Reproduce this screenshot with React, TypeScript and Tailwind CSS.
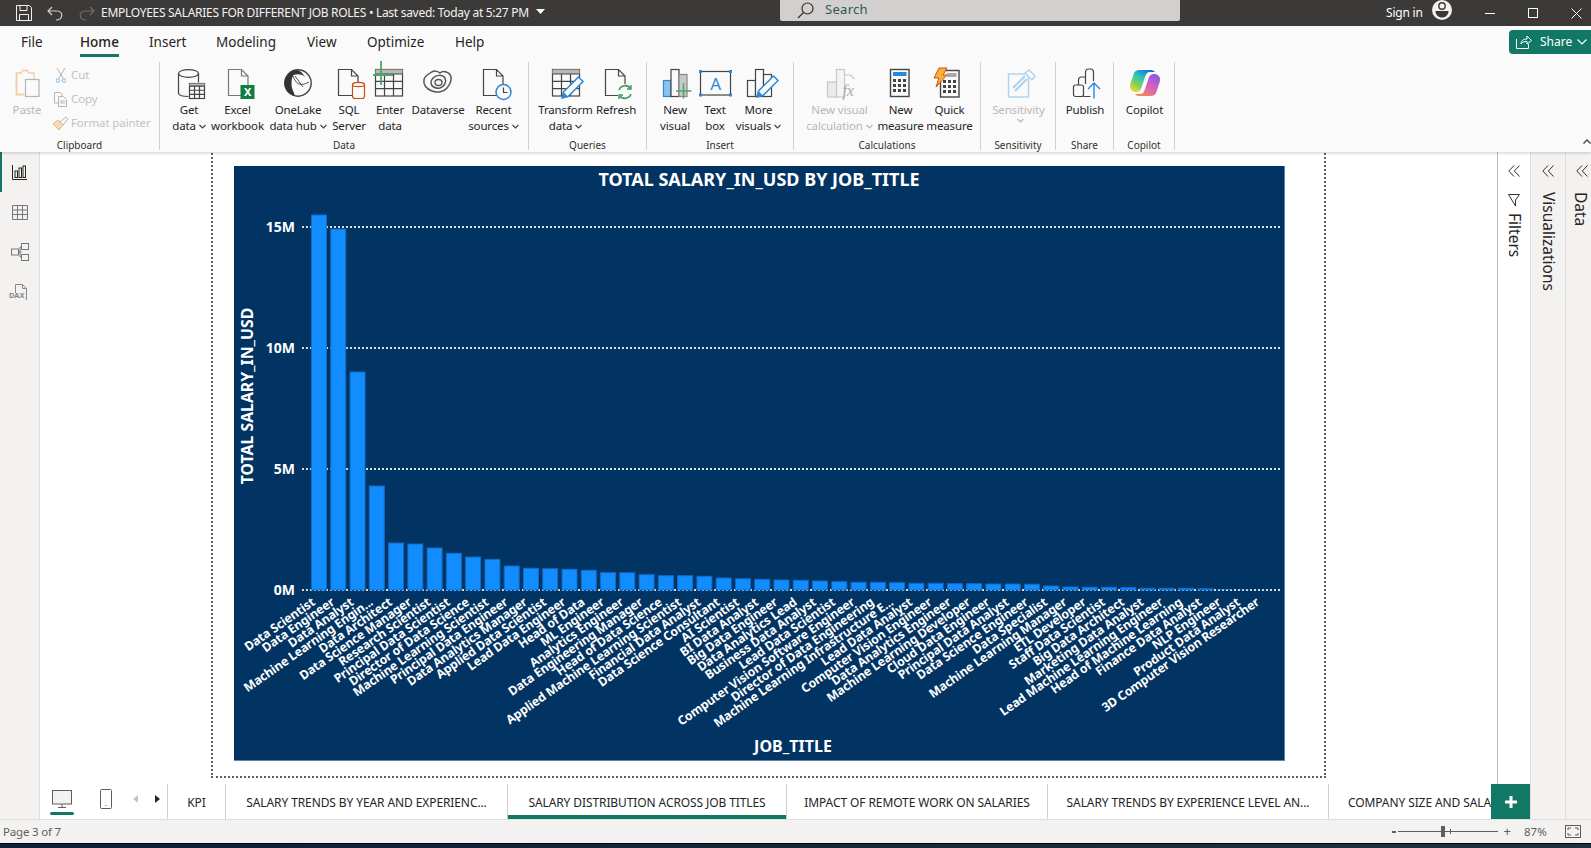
import React from "react";

const F = '"Noto Sans","Liberation Sans",sans-serif';
const DK = "#444";
const titles: [string, number][] = [
  ["Data Scientist", 375], ["Data Engineer", 361], ["Data Analyst", 218], ["Machine Learning Engin...", 104], ["Data Architect", 47],
  ["Data Science Manager", 46], ["Research Scientist", 42], ["Principal Data Scientist", 36.7], ["Director of Data Science", 33], ["Machine Learning Scientist", 30.7],
  ["Principal Data Engineer", 24], ["Data Analytics Manager", 21.7], ["Applied Data Scientist", 21.3], ["Lead Data Engineer", 20.7], ["Head of Data", 19.7],
  ["ML Engineer", 17.3], ["Analytics Engineer", 17.3], ["Data Engineering Manager", 15.3], ["Head of Data Science", 14.3], ["Applied Machine Learning Scientist", 14.3],
  ["Financial Data Analyst", 13.7], ["Data Science Consultant", 12], ["AI Scientist", 11.3], ["BI Data Analyst", 10.7], ["Big Data Engineer", 10],
  ["Data Analytics Lead", 9.7], ["Business Data Analyst", 9], ["Lead Data Scientist", 8.3], ["Computer Vision Software Engineer", 7.7], ["Director of Data Engineering", 7.7],
  ["Machine Learning Infrastructure E...", 7.3], ["Lead Data Analyst", 6.7], ["Computer Vision Engineer", 6.7], ["Data Analytics Engineer", 6.3], ["Machine Learning Developer", 6.3],
  ["Cloud Data Engineer", 6], ["Principal Data Analyst", 6], ["Data Science Engineer", 5.7], ["Data Specialist", 4], ["Machine Learning Manager", 3],
  ["ETL Developer", 2.7], ["Staff Data Scientist", 2.7], ["Big Data Architect", 2.3], ["Marketing Data Analyst", 1.7], ["Lead Machine Learning Engineer", 1.7],
  ["Head of Machine Learning", 1.7], ["Finance Data Analyst", 1.3], ["NLP Engineer", 0.6], ["Product Data Analyst", 0.4], ["3D Computer Vision Researcher", 0.2],
];

function Chart() {
  const y0 = 424;
  const grid: [string, number][] = [["15M", 61], ["10M", 182], ["5M", 303], ["0M", 424]];
  return (
    <svg width={1050} height={594} viewBox="0 0 1050 594" fontFamily={F} fill="#fff" fontWeight={700}>
      <text x={525} y={19.5} textAnchor="middle" fontSize={18} letterSpacing={0}>TOTAL SALARY_IN_USD BY JOB_TITLE</text>
      <text transform="translate(19 230) rotate(-90)" textAnchor="middle" fontSize={15.8}>TOTAL SALARY_IN_USD</text>
      <text x={559} y={586} textAnchor="middle" fontSize={16}>JOB_TITLE</text>
      {grid.map(([t, y]) => (
        <g key={t}>
          <line x1={68} x2={1046} y1={y} y2={y} stroke="#dcdcdc" strokeWidth={2} strokeDasharray="2 2" />
          <text x={61} y={y + 5} textAnchor="end" fontSize={14}>{t}</text>
        </g>
      ))}
      {titles.map(([name, h], i) => {
        const x = 77 + i * 19.27;
        return <rect key={name} x={x + 0.5} y={y0 - h} width={15} height={h} fill="#118DFF" stroke="#0f6cc4" strokeWidth={h > 1 ? 1 : 0} />;
      })}
      {titles.map(([name], i) => {
        const cx = 77 + i * 19.27 + 5;
        return (
          <text key={name} transform={`translate(${cx} 438) rotate(-35)`} textAnchor="end" fontSize={12.3} letterSpacing={-0.15}>{name}</text>
        );
      })}
    </svg>
  );
}

const S = ({ children, size = 32 }: { children: React.ReactNode; size?: number }) => (
  <svg width={size} height={size} viewBox={`0 0 ${size} ${size}`} fill="none" strokeWidth={1.2} className="overflow-visible block">{children}</svg>
);
const Doc = ({ x = 5, c = DK }: { x?: number; c?: string }) => (
  <path d={`M${x + 0.5} 1.5h13l6.5 6.5v19.5h-19.5zM${x + 13.5} 1.5v6.5h6.5`} stroke={c} fill="#fafafa" />
);
const TableGrid = ({ x, y, w, h, c = DK }: { x: number; y: number; w: number; h: number; c?: string }) => (
  <g stroke={c}>
    <rect x={x} y={y} width={w} height={h} fill="#fafafa" />
    <rect x={x} y={y} width={w} height={h * 0.17} fill="#b8b8b8" stroke="none" />
    <path d={`M${x} ${y + h * 0.17}h${w}M${x} ${y + h * 0.45}h${w}M${x} ${y + h * 0.72}h${w}M${x + w / 3} ${y + h * 0.17}v${h * 0.83}M${x + (2 * w) / 3} ${y + h * 0.17}v${h * 0.83}`} />
  </g>
);
const Pencil = ({ x = 0, y = 0 }: { x?: number; y?: number }) => (
  <g transform={`translate(${x} ${y})`}>
    <path d="M12 30l1.5-6 15-15 4.5 4.5-15 15z" fill="#fff" stroke="#2b88d8" strokeWidth={1.5} />
    <path d="M12 30l1.5-6 4.5 4.5z" fill="#2b88d8" />
  </g>
);
const Bars = () => (
  <g stroke={DK}>
    <rect x={4.5} y={12.5} width={8} height={16} fill="#fafafa" />
    <rect x={12.5} y={1.5} width={8} height={27} fill="#fafafa" />
    <rect x={20.5} y={6.5} width={8} height={22} fill="#fafafa" />
  </g>
);

const icons: Record<string, React.ReactNode> = {
  get: (
    <S>
      <path d="M5.5 5.5v19.5c0 2 4 3.5 10 3.5M25.5 5.5v9" stroke={DK} />
      <ellipse cx={15.5} cy={5.5} rx={10} ry={3.8} stroke={DK} />
      <TableGrid x={16.5} y={15.5} w={15} h={15} />
    </S>
  ),
  excel: (
    <S>
      <Doc x={6} c="#777" />
      <rect x={18.5} y={17} width={14} height={14} fill="#107c41" />
      <text x={25.5} y={28} fontSize={11} fontWeight={700} fill="#fff" textAnchor="middle" fontFamily={F}>X</text>
    </S>
  ),
  onelake: (
    <S>
      <circle cx={16} cy={15} r={13.2} stroke={DK} strokeWidth={1.4} fill="#fafafa" />
      <path d="M14 2c-6 1-11.5 6-11.5 13s5 11 10 13c1-2-3-6-3-12 0-4 .5-7 2-9 4-1.5 9-1 12 2.5C21 6 18 1.5 14 2z" fill="#333" />
      <path d="M11 8c3 8 7 11 16 6M13 8l8 11" stroke="#555" strokeWidth={1} />
    </S>
  ),
  sql: (
    <S>
      <Doc x={5} />
      <rect x={19.5} y={15} width={12} height={15.5} rx={2.5} fill="#fafafa" stroke="#ca5010" />
      <ellipse cx={25.5} cy={16.5} rx={6} ry={2.2} fill="#fafafa" stroke="#ca5010" />
    </S>
  ),
  enter: (
    <S>
      <TableGrid x={1.5} y={1.5} w={27} h={26.5} />
      <path d="M7 -7v24M-1 7h20" stroke="#4ea66a" strokeWidth={1.8} />
    </S>
  ),
  dataverse: (
    <S>
      <path d="M8 5c4-3 8-2 10 0 3-3 10-1 11 4 1 5-2 8-4 11-3 4-10 5-15 3-6-2-9-7-8-11 0-3 3-5 6-7z" stroke="#555" strokeWidth={1.5} />
      <path d="M11 10c3-3 9-4 12 0 2 4-1 9-5 10-5 1-9-2-9-5 0-2 1-4 2-5z" stroke="#555" strokeWidth={1.5} />
      <ellipse cx={16.5} cy={14.5} rx={3.5} ry={3} stroke="#555" strokeWidth={1.4} />
    </S>
  ),
  recent: (
    <S>
      <Doc x={5} />
      <circle cx={25.5} cy={24} r={7.5} fill="#fafafa" stroke="#2b88d8" strokeWidth={1.5} />
      <path d="M25.5 19.5v5h4" stroke={DK} />
    </S>
  ),
  transform: (
    <S>
      <TableGrid x={2.5} y={1.5} w={27} h={26.5} />
      <Pencil x={0} y={0} />
    </S>
  ),
  refresh: (
    <S>
      <Doc x={5} />
      <circle cx={25} cy={24} r={8} fill="#fafafa" stroke="none" />
      <path d="M19 22a6.5 6.5 0 0 1 11.5-1.5M31 26a6.5 6.5 0 0 1-11.5 1.5" stroke="#3d9a5c" strokeWidth={1.6} />
      <path d="M31 17v4h-4M19 31v-4h4" stroke="#3d9a5c" strokeWidth={1.4} />
    </S>
  ),
  newvisual: (
    <S>
      <rect x={4.5} y={12.5} width={7.5} height={16} fill="#8cc3ec" stroke="#2b88d8" />
      <rect x={12} y={1.5} width={8} height={27} fill="#fafafa" stroke={DK} />
      <rect x={20} y={6.5} width={8} height={22} fill="#c8c8c8" stroke="#888" />
      <path d="M24.5 15v15.5M17 23h15.5" stroke="#4ea66a" strokeWidth={1.5} />
    </S>
  ),
  textbox: (
    <S>
      <rect x={1.5} y={3.5} width={30} height={23.5} stroke={DK} />
      <g fill="#2b88d8">
        <rect x={0} y={2} width={3} height={3} /><rect x={30} y={2} width={3} height={3} /><rect x={0} y={25.5} width={3} height={3} /><rect x={30} y={25.5} width={3} height={3} />
      </g>
      <text x={16.5} y={22} fontSize={17} fill="#2b88d8" textAnchor="middle" fontFamily={F}>A</text>
    </S>
  ),
  more: (
    <S>
      <Bars />
      <Pencil x={2} y={-1} />
    </S>
  ),
  calc: (
    <S>
      <g stroke="#c8c8c8">
        <rect x={3.5} y={14} width={9} height={15} fill="#ebebeb" />
        <rect x={12.5} y={1.5} width={8} height={27.5} fill="#f4f4f4" />
        <path d="M20.5 7h6l4 4" stroke="#a9cdee" />
      </g>
      <text x={24} y={28} fontSize={16} fontStyle="italic" fill="#a8a8a8" textAnchor="middle" fontFamily="'Liberation Serif',serif">fx</text>
    </S>
  ),
  measure: (
    <S>
      <rect x={5.5} y={1.5} width={18.5} height={27} stroke={DK} strokeWidth={1.4} />
      <rect x={8} y={4} width={13.5} height={4} fill="#2b88d8" />
      <g fill={DK}>
        {[11, 16, 21].map((y) => [8, 13, 18].map((x) => <rect key={`${x}${y}`} x={x} y={y} width={3} height={3} />))}
      </g>
    </S>
  ),
  quick: (
    <S>
      <rect x={6.5} y={2.5} width={18.5} height={26.5} stroke={DK} strokeWidth={1.4} />
      <rect x={13} y={5} width={9.5} height={4} fill="#a8a8a8" />
      <g fill={DK}>
        {[12, 17, 22].map((y) => [9, 14, 19].map((x) => <rect key={`${x}${y}`} x={x} y={y} width={3} height={3} />))}
      </g>
      <path d="M5 0h8L9 7h4L2 19l3-9H0z" fill="#fbb03b" stroke="#ca5010" strokeWidth={1} />
    </S>
  ),
  sens: (
    <S>
      <rect x={5.5} y={6} width={20} height={23} stroke="#a9d3f2" strokeWidth={1.4} />
      <path d="M10 20l12-12M12 23l12-12" stroke="#a9d3f2" strokeWidth={2} />
      <path d="M22 5l4-3 6 6-3 4z" stroke="#a9d3f2" strokeWidth={1.4} fill="#fafafa" />
    </S>
  ),
  publish: (
    <S>
      <rect x={4.5} y={17} width={10} height={11.5} rx={2} stroke={DK} />
      <path d="M9.5 17v-5a3 3 0 0 1 3-3h4M14.5 28.5h7" stroke={DK} />
      <path d="M16.5 16V4a3 3 0 0 1 3-3h2a3 3 0 0 1 3 3v9" stroke={DK} />
      <path d="M25 30.5V15M19 21l6-6 6 6" stroke="#2b88d8" strokeWidth={1.4} />
    </S>
  ),
  copilot: (
    <S>
      <defs>
        <linearGradient id="cpa" x1="0.8" y1="0" x2="0.2" y2="1">
          <stop offset="0" stopColor="#0f6cd9" /><stop offset="0.4" stopColor="#2cc3c0" /><stop offset="0.75" stopColor="#8ed24d" /><stop offset="1" stopColor="#f7d43c" />
        </linearGradient>
        <linearGradient id="cpb" x1="0.8" y1="0" x2="0.2" y2="1">
          <stop offset="0" stopColor="#8a5ae0" /><stop offset="0.5" stopColor="#d95fc0" /><stop offset="1" stopColor="#f58a4a" />
        </linearGradient>
      </defs>
      <path d="M10 2h12c2 0 3 1 4 2l-5 0c-3 0-4 2-5 5l-4 12c-1 2-3 3-5 3-3 0-6-2-6-5 0-1 0-3 1-5l3-9C6 3 8 2 10 2z" fill="url(#cpa)" />
      <path d="M22 28H10c-2 0-3-1-4-2l5 0c3 0 4-2 5-5l4-12c1-2 3-3 5-3 3 0 6 2 6 5 0 1 0 3-1 5l-3 9c-1 2-3 3-5 3z" fill="url(#cpb)" />
    </S>
  ),
  paste: (
    <S>
      <path d="M5 5h5.5l1-2.5h5l1 2.5H23v8" stroke="#f2cfa3" strokeWidth={1.3} />
      <path d="M5.5 5v21.5h8" stroke="#f2cfa3" strokeWidth={2} />
      <rect x={14.5} y={11.5} width={13.5} height={17} stroke="#b5b5b5" fill="#fafafa" />
    </S>
  ),
};

function Caret({ c = "#444" }: { c?: string }) {
  return (
    <svg width={7} height={5} viewBox="0 0 7 5" className="inline-block ml-[3px]" fill="none" stroke={c} strokeWidth={1.2}>
      <path d="M.5 1l3 3 3-3" />
    </svg>
  );
}

function Btn({ w, icon, l1, l2, caret, off }: { w: number; icon: string; l1: string; l2?: string; caret?: boolean; off?: boolean }) {
  return (
    <div style={{ width: w }} className={`flex flex-col items-center shrink-0 whitespace-nowrap text-[11.5px] leading-[16px] tracking-[-0.15px] ${off ? "text-[#b9b7b5]" : "text-[#252423]"}`}>
      <div className="h-[34px] w-[32px]">{icons[icon]}</div>
      <div>{l1}</div>
      <div className="flex items-center">
        {l2 ?? ""}
        {caret && <Caret c={off ? "#b9b7b5" : "#444"} />}
      </div>
    </div>
  );
}

function Group({ w, label, pl, children }: { w: number; label: string; pl: number; children: React.ReactNode }) {
  return (
    <div style={{ width: w }} className="h-[88px] shrink-0 flex flex-col border-r border-[#d2d0ce]">
      <div style={{ paddingLeft: pl }} className="flex h-[76px] shrink-0 pt-[6px]">{children}</div>
      <div className="text-center text-[10px] leading-[14px] text-[#323130]">{label}</div>
    </div>
  );
}

function TitleBar() {
  return (
    <div className="h-[26px] bg-[#3b3a39] flex items-center text-white text-[12px]">
      <svg width={16} height={16} viewBox="0 0 16 16" fill="none" stroke="#f3f2f1" className="ml-[16px]">
        <path d="M.5.5h13l2 2v13H.5zM4 .5v5h7v-5M3.5 15.5v-6h9v6" />
      </svg>
      <svg width={16} height={15} viewBox="0 0 16 15" fill="none" stroke="#d2d0ce" strokeWidth={1.2} className="ml-[15px]">
        <path d="M5 1L1 5l4 4M1 5h9c7 0 6 9-1 9" />
      </svg>
      <svg width={16} height={15} viewBox="0 0 16 15" fill="none" stroke="#6e6d6c" strokeWidth={1.2} className="ml-[16px]">
        <path d="M11 1l4 4-4 4M15 5H6c-7 0-6 9 1 9" />
      </svg>
      <div className="ml-[6px] whitespace-nowrap tracking-[-0.29px] w-[435px] text-[#f3f2f1]">EMPLOYEES SALARIES FOR DIFFERENT JOB ROLES • Last saved: Today at 5:27 PM</div>
      <svg width={9} height={5} viewBox="0 0 9 5" fill="#fff" className="mb-[4px]"><path d="M0 0h9L4.5 5z" /></svg>
      <div className="ml-[235px] self-start h-[21px] w-[400px] bg-[#d2d0ce] rounded-b-[2px] flex items-center pl-[17px] text-[13px] text-[#2c5a52]">
        <svg width={17} height={17} viewBox="0 0 17 17" fill="none" stroke="#323130" strokeWidth={1.2}>
          <circle cx={10.5} cy={6.5} r={5.5} /><path d="M6.5 10.5L1 16" />
        </svg>
        <span className="ml-[11px] tracking-[0.3px] leading-none pb-[2px]">Search</span>
      </div>
      <div className="ml-[206px] tracking-[-0.2px]">Sign in</div>
      <svg width={20} height={20} viewBox="0 0 20 20" className="ml-[9px] mb-[7px]">
        <circle cx={10} cy={10} r={10} fill="#f3f2f1" />
        <circle cx={10} cy={6} r={3.2} fill="none" stroke="#3b3a39" strokeWidth={1.4} />
        <path d="M3.5 11h13c0 4-3 6.5-6.5 6.5S3.5 15 3.5 11z" fill="#3b3a39" />
      </svg>
      <div className="w-[10px] h-[1px] bg-white ml-[33px]" />
      <div className="w-[10px] h-[10px] border border-white ml-[33px]" />
      <svg width={11} height={11} viewBox="0 0 11 11" stroke="#fff" className="ml-[33px]"><path d="M.5.5l10 10M10.5.5l-10 10" /></svg>
    </div>
  );
}

function Small({ icon, label }: { icon: React.ReactNode; label: string }) {
  return (
    <div className="h-[24px] flex items-center text-[11.5px] text-[#c4c2c0] tracking-[-0.1px] whitespace-nowrap">
      <div className="w-[21px] flex justify-center">{icon}</div>
      {label}
    </div>
  );
}

function Ribbon() {
  return (
    <div className="h-[126px] bg-[#fafafa] relative z-10 shadow-[0_1px_3px_rgba(0,0,0,0.2)]">
      <div className="h-[36px] flex text-[13.5px] text-[#252423] pt-[5px] relative">
        {([["File", 21], ["Home", 80], ["Insert", 149], ["Modeling", 216], ["View", 307], ["Optimize", 367], ["Help", 455]] as [string, number][]).map(([t, x], i, a) => (
          <div key={t} style={{ width: i < a.length - 1 ? a[i + 1][1] - x : 50, marginLeft: i === 0 ? x : 0 }} className="shrink-0 h-[26px]">
            <span className={`inline-block h-[26px] leading-[22px] ${t === "Home" ? "border-b-[3px] border-[#117865] font-medium" : ""}`}>{t}</span>
          </div>
        ))}
        <div className="absolute right-0 top-[4px] w-[82px] h-[24px] rounded-l-[4px] bg-[#117865] text-white text-[12px] flex items-center pl-[7px]">
          <svg width={16} height={14} viewBox="0 0 16 14" fill="none" stroke="#fff"><path d="M.5 4v9.5h12V9M5 9c0-4 3-5 6-5V1l4.5 4.5L11 9V6.5c-3 0-5 .5-6 2.5z" /></svg>
          <span className="ml-[8px]">Share</span>
          <svg width={10} height={6} viewBox="0 0 10 6" fill="none" stroke="#fff" strokeWidth={1.2} className="ml-[5px]"><path d="M.5.5l4.5 4.5 4.5-4.5" /></svg>
        </div>
      </div>
      <div className="flex">
        <Group w={160} label="Clipboard" pl={5}>
          <Btn w={44} icon="paste" l1="Paste" off />
          <div className="flex flex-col -mt-[5px] ml-[1px]">
            <Small label="Cut" icon={<svg width={10} height={15} viewBox="0 0 10 15" fill="none" stroke="#b5b5b5"><path d="M1 0l6 10M9 0L3 10" /><circle cx={2} cy={12.5} r={1.8} stroke="#7db8e8" /><circle cx={8} cy={12.5} r={1.8} stroke="#7db8e8" /></svg>} />
            <Small label="Copy" icon={<svg width={13} height={15} viewBox="0 0 13 15" fill="none" stroke="#b5b5b5"><path d="M4 11H.5V.5h6L8 2v2M4.5 4.5h5l3 3v7h-8zM6 9h5M6 11h5" /></svg>} />
            <Small label="Format painter" icon={<svg width={17} height={15} viewBox="0 0 17 15" fill="none"><path d="M1 8l6 6 4-5-5-5z" fill="#f7d9b5" stroke="#eab676" /><path d="M8 6l6-5 2 2-5 6" stroke="#b5b5b5" /></svg>} />
          </div>
        </Group>
        <Group w={369} label="Data" pl={5}>
          <Btn w={48} icon="get" l1="Get" l2="data" caret />
          <Btn w={49} icon="excel" l1="Excel" l2="workbook" />
          <Btn w={72} icon="onelake" l1="OneLake" l2="data hub" caret />
          <Btn w={30} icon="sql" l1="SQL" l2="Server" />
          <Btn w={52} icon="enter" l1="Enter" l2="data" />
          <Btn w={44} icon="dataverse" l1="Dataverse" />
          <Btn w={67} icon="recent" l1="Recent" l2="sources" caret />
        </Group>
        <Group w={118} label="Queries" pl={5}>
          <Btn w={63} icon="transform" l1="Transform" l2="data" caret />
          <Btn w={38} icon="refresh" l1="Refresh" />
        </Group>
        <Group w={147} label="Insert" pl={5}>
          <Btn w={46} icon="newvisual" l1="New" l2="visual" />
          <Btn w={34} icon="textbox" l1="Text" l2="box" />
          <Btn w={53} icon="more" l1="More" l2="visuals" caret />
        </Group>
        <Group w={187} label="Calculations" pl={5}>
          <Btn w={81} icon="calc" l1="New visual" l2="calculation" caret off />
          <Btn w={41} icon="measure" l1="New" l2="measure" />
          <Btn w={57} icon="quick" l1="Quick" l2="measure" />
        </Group>
        <Group w={75} label="Sensitivity" pl={0}>
          <Btn w={75} icon="sens" l1="Sensitivity" l2="" caret off />
        </Group>
        <Group w={58} label="Share" pl={0}>
          <Btn w={58} icon="publish" l1="Publish" />
        </Group>
        <Group w={61} label="Copilot" pl={0}>
          <Btn w={61} icon="copilot" l1="Copilot" />
        </Group>
      </div>
      <svg width={8} height={5} viewBox="0 0 8 5" fill="none" stroke="#444" strokeWidth={1.4} className="absolute right-0 bottom-[8px]"><path d="M.5 4.5L4 1l3.5 3.5" /></svg>
    </div>
  );
}

function Rail() {
  return (
    <div className="w-[40px] shrink-0 bg-[#f3f2f1] border-r border-[#e1dfdd] flex flex-col">
      <div className="h-[40px] border-l-[2px] border-[#117865] flex items-center justify-center pr-[2px]">
        <svg width={16} height={15} viewBox="0 0 16 15" fill="none" stroke="#252423"><path d="M.5 0v14.5H15" /><rect x={3} y={6} width={2.5} height={6.5} /><rect x={7} y={3} width={2.5} height={9.5} /><rect x={11} y={1} width={2.5} height={11.5} /></svg>
      </div>
      <div className="h-[40px] flex items-center justify-center">
        <svg width={16} height={15} viewBox="0 0 16 15" fill="none" stroke="#777"><path d="M.5.5h15v14H.5zM.5 5h15M.5 9.5h15M5.5.5v14M10.5.5v14" /></svg>
      </div>
      <div className="h-[40px] flex items-center justify-center">
        <svg width={18} height={18} viewBox="0 0 18 18" fill="none" stroke="#777"><rect x={.5} y={6} width={7} height={6} /><rect x={10.5} y={.5} width={7} height={6} /><rect x={10.5} y={11.5} width={7} height={6} /><path d="M7.5 9h3M10.5 4H9v10h1.5" /></svg>
      </div>
      <div className="h-[40px] flex flex-col items-center justify-center relative">
        <svg width={16} height={17} viewBox="0 0 16 17" fill="none" stroke="#8a8886"><path d="M3.5 9V.5h7l4 4v11h-1M10.5.5v4h4" /></svg>
        <span className="absolute top-[20px] left-[9px] text-[7.5px] font-bold text-[#8a8886] leading-none">DAX</span>
      </div>
    </div>
  );
}

function Canvas() {
  return (
    <div className="flex-1 bg-white overflow-hidden">
      <div className="ml-[171px] w-[1115px] h-[636px] -mt-[10px] border-2 border-t-0 border-dotted border-[#605e5c] pl-[21px] pt-[24px]">
        <div className="w-[1050px] h-[594px] bg-[#013363] border-r border-b border-[#5f84a8] box-content">
          <Chart />
        </div>
      </div>
    </div>
  );
}

function Tabs() {
  const tabs: [string, number, boolean?][] = [
    ["KPI", 58],
    ["SALARY TRENDS BY YEAR AND EXPERIENC...", 282],
    ["SALARY DISTRIBUTION ACROSS JOB TITLES", 279, true],
    ["IMPACT OF REMOTE WORK ON SALARIES", 261],
    ["SALARY TRENDS BY EXPERIENCE LEVEL AN...", 281],
  ];
  return (
    <div className="h-[35px] bg-white flex shrink-0 overflow-hidden">
      <div className="w-[127px] shrink-0 flex items-center relative pb-[5px]">
        <div className="ml-[11px] w-[22px] flex flex-col items-center">
          <svg width={20} height={19} viewBox="0 0 20 19" fill="none" stroke="#605e5c"><rect x={.5} y={.5} width={19} height={13.5} fill="#f3f2f1" /><path d="M10 14v3M6 17.5h8" /></svg>
        </div>
        <div className="absolute left-[10px] bottom-[4px] w-[24px] h-[3px] rounded-[2px] bg-[#117865]" />
        <svg width={12} height={20} viewBox="0 0 12 20" fill="none" stroke="#605e5c" className="ml-[27px]"><rect x={.5} y={.5} width={11} height={19} rx={1} /><path d="M5.5 16.5h1" /></svg>
        <svg width={5} height={8} viewBox="0 0 5 8" fill="#c8c6c4" className="ml-[21px]"><path d="M5 0v8L0 4z" /></svg>
        <svg width={5} height={8} viewBox="0 0 5 8" fill="#252423" className="ml-[17px]"><path d="M0 0v8l5-4z" /></svg>
      </div>
      {tabs.map(([t, w, on]) => (
        <div key={t} style={{ width: w }} className="shrink-0 border-l border-[#d2d0ce] flex items-center justify-center text-[12px] tracking-[-0.1px] text-[#252423] whitespace-nowrap relative pt-[3px]">
          {t}
          {on && <div className="absolute left-0 right-0 bottom-0 h-[4px] bg-[#117865]" />}
        </div>
      ))}
      <div className="border-l border-[#d2d0ce] flex-1 flex items-center pl-[19px] pt-[3px] text-[12px] tracking-[-0.1px] text-[#252423] whitespace-nowrap overflow-hidden">COMPANY SIZE AND SALARY</div>
    </div>
  );
}

const Dbl = () => (
  <svg width={12} height={12} viewBox="0 0 12 12" fill="none" stroke="#323130"><path d="M6 .5L.8 6 6 11.5M11.5.5L6.3 6l5.2 5.5" /></svg>
);

function Panels() {
  return (
    <div className="flex shrink-0 text-[15.5px] text-[#252423] relative">
      <div className="w-[33px] bg-white border-l border-[#bdbbb9] flex flex-col items-center pt-[13px]">
        <Dbl />
        <svg width={12} height={13} viewBox="0 0 12 13" fill="none" stroke="#323130" className="mt-[17px]"><path d="M.5.5h11L7.5 6v6L.5.5z" /></svg>
        <span className="[writing-mode:vertical-rl] mt-[6px] leading-none">Filters</span>
      </div>
      <div className="w-[35px] bg-[#f3f2f1] border-l border-[#e1dfdd] flex flex-col items-center pt-[13px]">
        <Dbl />
        <span className="[writing-mode:vertical-rl] mt-[15px] leading-none">Visualizations</span>
      </div>
      <div className="w-[26px] bg-[#f3f2f1] border-l border-[#e1dfdd] flex flex-col items-start pl-[10px] pt-[13px]">
        <Dbl />
        <span className="[writing-mode:vertical-rl] mt-[15px] leading-none -ml-[4px]">Data</span>
      </div>
      <div className="absolute left-[-6px] bottom-0 w-[39px] h-[35px] bg-[#117865] flex items-center justify-center">
        <svg width={12} height={12} viewBox="0 0 12 12" fill="#fff"><path d="M4.5 0h3v4.5H12v3H7.5V12h-3V7.5H0v-3h4.5z" /></svg>
      </div>
    </div>
  );
}

function Status() {
  return (
    <div className="h-[24px] bg-[#f3f2f1] border-t border-[#e1dfdd] flex items-center text-[11.5px] text-[#605e5c] shrink-0">
      <span className="ml-[3px] tracking-[-0.2px]">Page 3 of 7</span>
      <div className="ml-auto flex items-center">
        <div className="w-[4px] h-[2px] bg-[#605e5c]" />
        <div className="ml-[2px] w-[100px] h-[1px] bg-[#605e5c] relative">
          <div className="absolute left-[43px] -top-[5px] w-[4px] h-[11px] bg-[#605e5c]" />
          <div className="absolute left-[52px] -top-[2px] w-[1px] h-[5px] bg-[#605e5c]" />
        </div>
        <span className="ml-[6px] text-[13px]">+</span>
        <span className="ml-[13px] w-[32px]">87%</span>
        <svg width={16} height={13} viewBox="0 0 16 13" fill="none" stroke="#605e5c" className="ml-[9px] mr-[10px]"><rect x={.5} y={.5} width={15} height={12} /><path d="M3 5V3h3M10 3h3v2M3 8v2h3M10 10h3V8" /></svg>
      </div>
    </div>
  );
}

export default function App() {
  return (
    <div className="w-[1591px] h-[848px] overflow-hidden flex flex-col bg-white" style={{ fontFamily: F }}>
      <TitleBar />
      <Ribbon />
      <div className="flex h-[667px] shrink-0">
        <Rail />
        <div className="flex-1 min-w-0 flex flex-col">
          <Canvas />
          <Tabs />
        </div>
        <Panels />
      </div>
      <Status />
      <div className="flex-1 border-t border-black bg-gradient-to-r from-[#0a1f38] to-[#1b3340]" />
    </div>
  );
}
